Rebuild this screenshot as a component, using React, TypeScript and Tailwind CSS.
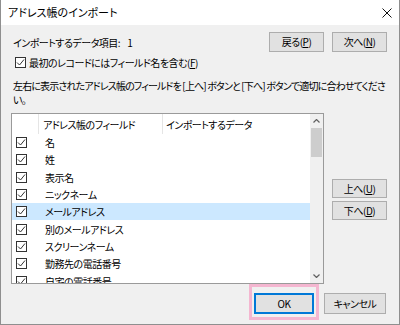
import React from "react";

const fields = [
  "名",
  "姓",
  "表示名",
  "ニックネーム",
  "メールアドレス",
  "別のメールアドレス",
  "スクリーンネーム",
  "勤務先の電話番号",
  "自宅の電話番号",
];

function Check({ size = 11 }: { size?: number }) {
  return (
    <span
      className="flex items-center justify-center border border-[#333333] bg-white shrink-0"
      style={{ width: size, height: size }}
    >
      <svg width={size - 2} height={size - 2} viewBox="0 0 9 9">
        <polyline points="1,4.5 3.5,7 8,1.5" fill="none" stroke="#333333" strokeWidth="1" />
      </svg>
    </span>
  );
}

function Btn({ children, w = "w-[55px]", h = "h-[20px]", focus = false }: { children: React.ReactNode; w?: string; h?: string; focus?: boolean }) {
  return (
    <button
      className={
        w +
        " " +
        h +
        " flex items-center justify-center bg-[#e1e1e1] text-[10px] text-black leading-none " +
        (focus ? "border-2 border-[#0078d7]" : "border border-[#adadad]")
      }
    >
      {children}
    </button>
  );
}

export default function App() {
  return (
    <div className="w-[400px] h-[325px] flex flex-col overflow-hidden border-x border-b border-[#8f8f8f] font-['Noto_Sans_CJK_JP',sans-serif] [font-feature-settings:'palt'] tracking-[-0.5px] text-black">
      {/* Title bar */}
      <div className="h-[25px] bg-white flex items-center justify-between pl-[7px] pr-[7px] shrink-0">
        <span className="text-[11px] tracking-normal">アドレス帳のインポート</span>
        <svg width="10" height="10" viewBox="0 0 10 10">
          <path d="M0.5 0.5 L9.5 9.5 M9.5 0.5 L0.5 9.5" stroke="#111" strokeWidth="1" />
        </svg>
      </div>

      {/* Body */}
      <div className="flex-1 bg-[#f0f0f0] flex flex-col">
        <div className="mt-[7px] h-[20px] flex items-center pl-[12px] pr-[12px] gap-[8px]">
          <span className="flex-1 text-[10px]">
            インポートするデータ項目:<span className="ml-[7px]">1</span>
          </span>
          <Btn>
            戻る(<span className="underline">P</span>)
          </Btn>
          <Btn>
            次へ(<span className="underline">N</span>)
          </Btn>
        </div>

        <div className="mt-[3px] h-[14px] flex items-center pl-[14px] gap-[3px] text-[10px]">
          <Check />
          <span>
            最初のレコードにはフィールド名を含む(<span className="underline">F</span>)
          </span>
        </div>

        <p className="mt-[10px] pl-[12px] text-[10px] leading-[14px] tracking-[-0.85px] whitespace-nowrap">
          左右に表示されたアドレス帳のフィールドを [上へ] ボタンと [下へ] ボタンで適切に合わせてくださ
          <br />
          い。
        </p>

        <div className="mt-[6px] flex">
          {/* List */}
          <div className="ml-[10px] w-[313px] h-[171px] border border-[#9a9a9a] bg-white flex overflow-hidden">
            <div className="flex-1 flex flex-col text-[10px]">
              <div className="h-[20px] flex shrink-0">
                <div className="w-[27px] border-r border-[#e5e5e5]" />
                <div className="w-[124px] border-r border-[#e5e5e5] pl-[4px] flex items-center">アドレス帳のフィールド</div>
                <div className="pl-[3px] flex items-center">インポートするデータ</div>
              </div>
              {fields.map((f, i) => (
                <div
                  key={f}
                  className={"h-[17.3px] shrink-0 flex items-center pl-[4px] " + (i === 4 ? "bg-[#cce8ff]" : "")}
                >
                  <Check />
                  <span className="ml-[18px]">{f}</span>
                </div>
              ))}
            </div>
            {/* Scrollbar */}
            <div className="w-[13px] bg-[#f0f0f0] flex flex-col shrink-0">
              <div className="h-[14px] flex items-center justify-center">
                <svg width="7" height="4" viewBox="0 0 7 4">
                  <polyline points="0.5,3.5 3.5,0.5 6.5,3.5" fill="none" stroke="#606060" strokeWidth="1.2" />
                </svg>
              </div>
              <div className="mx-[1px] h-[29px] bg-[#cdcdcd]" />
              <div className="flex-1" />
              <div className="h-[14px] flex items-center justify-center">
                <svg width="7" height="4" viewBox="0 0 7 4">
                  <polyline points="0.5,0.5 3.5,3.5 6.5,0.5" fill="none" stroke="#606060" strokeWidth="1.2" />
                </svg>
              </div>
            </div>
          </div>

          <div className="ml-[8px] mt-[66px] flex flex-col gap-[3px]">
            <Btn h="h-[19px]">
              上へ(<span className="underline">U</span>)
            </Btn>
            <Btn h="h-[19px]">
              下へ(<span className="underline">D</span>)
            </Btn>
          </div>
        </div>

        <div className="mt-[9px] flex justify-end pr-[13px] gap-[10px]">
          <div className="relative">
            <Btn w="w-[60px]" h="h-[21px]" focus>
              <span className="font-normal">OK</span>
            </Btn>
            <div className="absolute -left-[5px] -right-[5px] -top-[9px] -bottom-[6px] border-[3px] border-[#f4b6d0]" />
          </div>
          <Btn w="w-[62px]" h="h-[21px]">
            キャンセル
          </Btn>
        </div>
      </div>
    </div>
  );
}
